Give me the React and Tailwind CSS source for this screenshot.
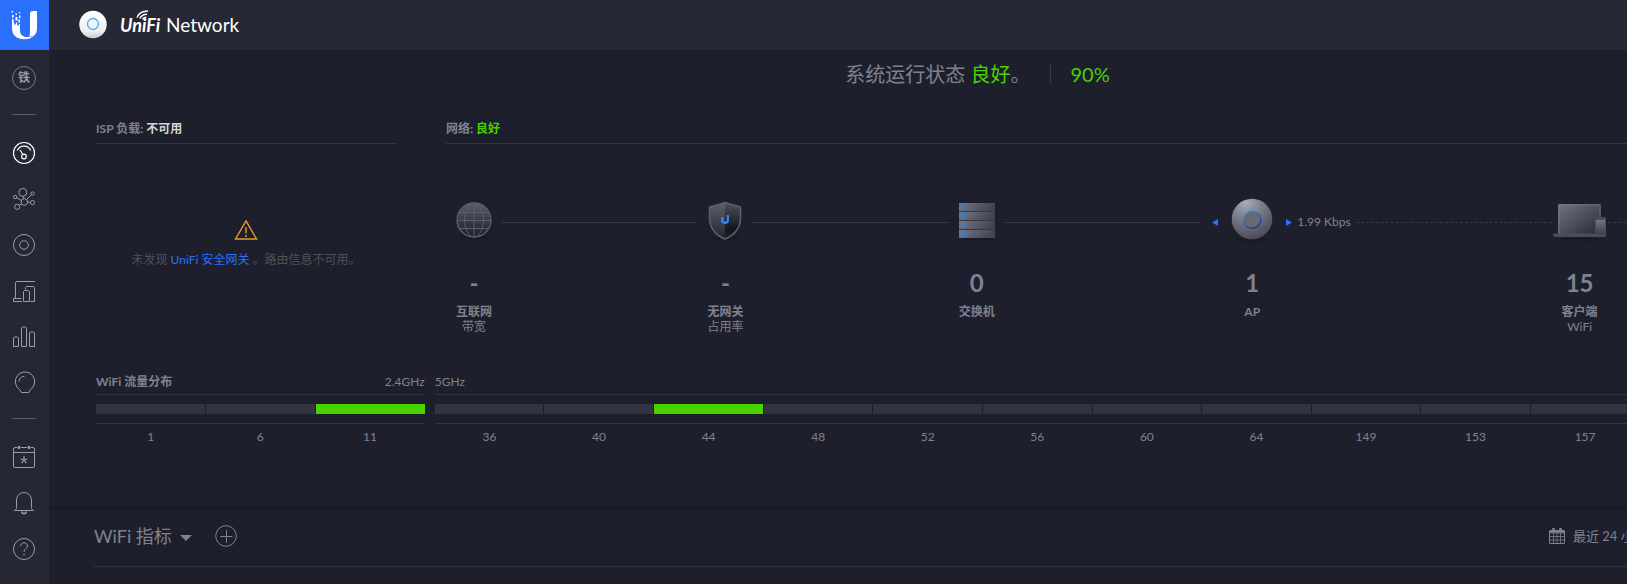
import React from "react";

const channels24 = [
  { channel: 1 },
  { channel: 6 },
  { channel: 11, active: true },
];

const channels5 = [
  { channel: 36 },
  { channel: 40 },
  { channel: 44, active: true },
  { channel: 48 },
  { channel: 52 },
  { channel: 56 },
  { channel: 60 },
  { channel: 64 },
  { channel: 149 },
  { channel: 153 },
  { channel: 157 },
  { channel: 161 },
  { channel: 165 },
];

function Icon({ children }) {
  return (
    <svg width="24" height="24" viewBox="0 0 24 24" fill="none" stroke="currentColor" strokeWidth="1" aria-hidden="true">
      {children}
    </svg>
  );
}

const mainNav = [
  {
    label: "仪表板",
    active: true,
    icon: (
      <Icon>
        <g strokeWidth="1.2">
          <circle cx="12" cy="12" r="10.5" />
          <path d="M5.2 9.6C6.6 6.6 9 5.2 12 5.2s5.4 1.4 6.8 4.4" />
          <circle cx="12" cy="15.5" r="2.3" />
          <path d="M10.8 13.5 8 9" />
        </g>
      </Icon>
    ),
  },
  {
    label: "拓扑",
    icon: (
      <Icon>
        <circle cx="10.8" cy="5.4" r="4" />
        <circle cx="12.3" cy="15" r="3.3" />
        <circle cx="20.6" cy="6.5" r="1.6" />
        <circle cx="20.5" cy="15.6" r="2.1" />
        <circle cx="3.2" cy="10" r="1.7" />
        <circle cx="5.2" cy="19.8" r="2.6" />
        <path d="M11.3 9.4l.4 2.3M14.5 12.6l5-4.9M15.6 15.2h2.8M4.7 10.8l4.7 2.6M7.3 18.2l2.4-1.4" />
      </Icon>
    ),
  },
  {
    label: "设备",
    icon: (
      <Icon>
        <circle cx="12" cy="12" r="10.5" />
        <circle cx="12" cy="12" r="4.3" />
      </Icon>
    ),
  },
  {
    label: "客户端",
    icon: (
      <Icon>
        <path d="M23 2.500H4.500L3.500 3.500V19.500M1.500 19.500H9.500M10 22.500H1.500v-3" />
        <path d="M13.500 10.500V8.500l1-1h7l1 1v14h-4" />
        <path d="M11.500 12.500l1-1h4l1 1v10h-6z" />
      </Icon>
    ),
  },
  {
    label: "统计",
    icon: (
      <Icon>
        <path d="M1.500 21.500v-8.500l1-1h3l1 1v8.500zM9.500 21.500V3l1-1h3l1 1v18.500zM17.500 21.500V8l1-1h3l1 1v13.500z" />
      </Icon>
    ),
  },
  {
    label: "洞察",
    icon: (
      <Icon>
        <path d="M7.800 18.800a9.700 9.700 0 1 1 10.400 0l-1.400 2.700H9.200z" />
        <path d="M7 10.500a6 6 0 0 1 5.500-5.200" />
      </Icon>
    ),
  },
];

const secondaryNav = [
  {
    label: "事件",
    icon: (
      <Icon>
        <path d="M5.500 2.500H3A1.500 1.500 0 0 0 1.500 4v17A1.500 1.500 0 0 0 3 22.500h18a1.500 1.500 0 0 0 1.500-1.500V4A1.500 1.500 0 0 0 21 2.500h-2.500M8.500 2.500h7M1.500 7.500h21" />
        <path strokeWidth="2" d="M7 1v3M17 1v3" />
        <path strokeWidth="1.200" d="M12 11v4M12 15l-3.500-1M12 15l3.500-1M12 15l-2.300 3.200M12 15l2.300 3.200" />
      </Icon>
    ),
  },
  {
    label: "警报",
    icon: (
      <Icon>
        <path d="M2.500 19.500c1.500-.600 2-1.500 2-3V9a7.500 7.500 0 0 1 15 0v7.500c0 1.500.500 2.400 2 3z" />
        <path strokeWidth="1.500" d="M9.800 20.500c0 2.800 4.400 2.800 4.400 0" />
      </Icon>
    ),
  },
  {
    label: "帮助",
    icon: (
      <Icon>
        <circle cx="12" cy="12" r="10.500" />
        <path d="M8.700 9.200c0-4.600 6.800-4.400 6.800-.3 0 2.800-3.500 2.700-3.500 6M12 16.800v1.700" />
      </Icon>
    ),
  },
];

function NavItem({ label, active, icon }) {
  return (
    <a
      href="#"
      aria-label={label}
      className={`flex h-[46px] w-12 items-center justify-center ${active ? "text-white" : "text-[#9a9ca8]"}`}
    >
      {icon}
    </a>
  );
}

function Sidebar() {
  return (
    <nav className="flex w-[49px] shrink-0 flex-col items-start bg-[#252735]">
      <a href="#" aria-label="Ubiquiti" className="flex h-[50px] w-full items-center justify-center bg-[#2b70fb]">
        <svg width="28" height="30" viewBox="0 0 28 30" fill="#fff" aria-hidden="true">
          <path d="M26 1v16.500c0 3.300-.600 5.400-2 7.200-1 1.300-3 .600-6 1.800 1.200-1.400 1-3.500 1-7V4c0-2 1-3 3-3z" />
          <path d="M1 11.500h2v3h1.800v-2h1.400v3H8V14h1v6c0 3.300 1 5 3.500 6.300 3.500 1.700 8 .5 11-1.300-2 2.800-5.700 4.200-10.200 4.200C5 29.200 1 24.800 1 17.800z" />
          <path d="M.5 1H2v1.500H.5zM4.500 3.500H6V5H4.500zM8 2h1.200v1.200H8zM1 5h1.700v2.500H1zM4.500 7h2v3.500h-2zM8 5.500h1.500V8H8zM1 9h1.500v3H1zM7.500 9.500H9v3H7.500z" />
        </svg>
      </a>
      <button
        type="button"
        aria-label="站点 铁"
        className="mt-4 ml-3 flex size-6 items-center justify-center rounded-full border border-[#777985] text-xs leading-none font-bold text-[#9a9ca8]"
      >
        铁
      </button>
      <div className="mt-6 mb-[15px] ml-3 h-px w-6 bg-[#5b5d69]" />
      {mainNav.map((item) => (
        <NavItem key={item.label} {...item} />
      ))}
      <div className="mt-3 mb-[15px] ml-3 h-px w-6 bg-[#5b5d69]" />
      {secondaryNav.map((item) => (
        <NavItem key={item.label} {...item} />
      ))}
    </nav>
  );
}

function Header() {
  return (
    <header className="flex h-[50px] shrink-0 items-center bg-[#262836] pl-[30px] text-white">
      <svg width="28" height="30" viewBox="0 0 28 30" aria-hidden="true">
        <defs>
          <linearGradient id="disc" x1="0" y1="0" x2="0" y2="1">
            <stop offset="0" stopColor="#fff" />
            <stop offset=".75" stopColor="#eeeeef" />
            <stop offset="1" stopColor="#c9cacd" />
          </linearGradient>
        </defs>
        <circle cx="14" cy="14.500" r="13.700" fill="url(#disc)" />
        <circle cx="14" cy="14" r="5.500" fill="#f2f3f4" stroke="#45aef2" strokeWidth="1.300" />
      </svg>
      <h1 className="flex items-baseline gap-[6px] pl-[13px] text-[19px] leading-6">
        <span className="relative font-['Liberation_Sans_Narrow','Lato',sans-serif] text-lg leading-6 font-bold italic">
          UniFi
          <svg
            className="absolute -top-[3px] left-4"
            width="13"
            height="10"
            viewBox="0 0 13 10"
            fill="none"
            stroke="#fff"
            strokeWidth="1.500"
            aria-hidden="true"
          >
            <path d="M1 7.500C2.500 3.500 6.500 1 12 1M3.800 8.500C5 6 7.500 4.300 11 4.200M6.500 9.300C7.300 8.200 8.500 7.400 10.200 7.300" />
          </svg>
        </span>
        <span>Network</span>
      </h1>
    </header>
  );
}

function GlobeIcon() {
  return (
    <svg width="40" height="42" viewBox="0 0 40 42" aria-hidden="true">
      <defs>
        <linearGradient id="globe" x1="0" y1="0" x2="0" y2="1">
          <stop offset="0" stopColor="#5b5c6c" />
          <stop offset="1" stopColor="#1c1d29" />
        </linearGradient>
      </defs>
      <ellipse cx="20" cy="37" rx="15" ry="3" fill="#191a25" />
      <circle cx="20" cy="20" r="17" fill="url(#globe)" />
      <g fill="none" stroke="#5c5e6c">
        <circle cx="20" cy="20" r="17" strokeWidth="1.300" />
        <ellipse cx="20" cy="20" rx="9.500" ry="17" />
        <path d="M20 3v34M3 20.500h34M5.500 12.500h29M5.500 28.500h29" />
      </g>
    </svg>
  );
}

function ShieldIcon() {
  return (
    <svg width="40" height="42" viewBox="0 0 40 42" aria-hidden="true">
      <defs>
        <linearGradient id="shieldLeft" x1="0" y1="0" x2="0" y2="1">
          <stop offset="0" stopColor="#5f606e" />
          <stop offset="1" stopColor="#22232f" />
        </linearGradient>
        <linearGradient id="shieldRight" x1="0" y1="0" x2="0" y2="1">
          <stop offset="0" stopColor="#50515e" />
          <stop offset=".7" stopColor="#151620" />
          <stop offset="1" stopColor="#1c1d29" />
        </linearGradient>
      </defs>
      <ellipse cx="20" cy="38" rx="15" ry="2.500" fill="#191a25" />
      <path d="M20 2.500 4.500 7v11c0 10 6.500 17.500 15.500 21z" fill="url(#shieldLeft)" />
      <path d="M20 2.500 35.500 7v11c0 10-6.500 17.500-15.500 21z" fill="url(#shieldRight)" />
      <path d="M20 2.500 35.500 7v11c0 10-6.500 17.500-15.500 21C11 35.500 4.500 28 4.500 18V7z" fill="none" stroke="#5e606c" strokeWidth="1.500" />
      <path d="M17.200 17v3.500c0 3 5.600 3 5.600 0V15" fill="none" stroke="#2f86ee" strokeWidth="2.300" />
    </svg>
  );
}

function SwitchIcon() {
  return (
    <svg width="40" height="42" viewBox="0 0 40 42" aria-hidden="true">
      <defs>
        <linearGradient id="rack" x1="0" y1="0" x2="1" y2=".2">
          <stop offset="0" stopColor="#777886" />
          <stop offset="1" stopColor="#444551" />
        </linearGradient>
      </defs>
      <ellipse cx="20" cy="39" rx="16" ry="2" fill="#191a25" />
      <rect x="2" y="3" width="36" height="35" fill="#373844" />
      {[3, 12, 21, 30].map((y) => (
        <g key={y}>
          <rect x="2" y={y} width="36" height="8" fill="url(#rack)" />
          <rect x="4.500" y={y + 2.5} width="3.500" height="3.500" fill="#547ca8" stroke="#2681d3" strokeWidth="1.200" />
        </g>
      ))}
    </svg>
  );
}

function AccessPointIcon() {
  return (
    <svg width="42" height="46" viewBox="0 0 42 46" aria-hidden="true">
      <defs>
        <radialGradient id="ap" cx=".35" cy=".1" r=".95">
          <stop offset="0" stopColor="#aaabb9" />
          <stop offset=".5" stopColor="#747582" />
          <stop offset="1" stopColor="#474852" />
        </radialGradient>
        <linearGradient id="ring" x1="0" y1="0" x2=".6" y2="1">
          <stop offset="0" stopColor="#48a9e6" />
          <stop offset="1" stopColor="#1d379e" />
        </linearGradient>
      </defs>
      <ellipse cx="21" cy="42" rx="17" ry="3" fill="#191a25" />
      <circle cx="21" cy="21" r="20.300" fill="url(#ap)" />
      <circle cx="21" cy="21.500" r="8.800" fill="#686975" stroke="url(#ring)" strokeWidth="1.500" />
    </svg>
  );
}

function ClientsIcon() {
  return (
    <svg width="54" height="42" viewBox="0 0 54 42" aria-hidden="true">
      <defs>
        <linearGradient id="screen" x1="0" y1="0" x2="1" y2="1">
          <stop offset="0" stopColor="#6f707f" />
          <stop offset="1" stopColor="#2a2b38" />
        </linearGradient>
        <linearGradient id="frame" x1="0" y1="0" x2="1" y2="1">
          <stop offset="0" stopColor="#777886" />
          <stop offset="1" stopColor="#42434f" />
        </linearGradient>
        <linearGradient id="phone" x1="0" y1="0" x2="0" y2="1">
          <stop offset="0" stopColor="#777886" />
          <stop offset="1" stopColor="#3b3c49" />
        </linearGradient>
      </defs>
      <ellipse cx="28" cy="39" rx="20" ry="2" fill="#191a25" />
      <rect x="5" y="4" width="43" height="32" rx="1.500" fill="url(#frame)" />
      <rect x="7" y="6" width="39" height="28" fill="url(#screen)" />
      <path d="M0 33.500h44V37H3c-1.500 0-3-1-3-2z" fill="#4c4d5a" />
      <rect x="42" y="17" width="11" height="20" rx="1.500" fill="#4b4c59" />
      <rect x="43" y="20" width="9" height="14" fill="url(#phone)" />
    </svg>
  );
}

function NodeInfo({ value, label, detail }) {
  return (
    <div className="flex flex-col items-center whitespace-nowrap">
      <strong className="text-2xl leading-8 font-bold">{value}</strong>
      <span className="mt-[5px] text-xs leading-[15px] font-bold">{label}</span>
      {detail && <span className="text-xs leading-[15px]">{detail}</span>}
    </div>
  );
}

function Node({ icon, ...info }) {
  return (
    <div className="flex w-14 shrink-0 flex-col items-center">
      <div className="flex h-[67px] items-start">{icon}</div>
      <NodeInfo {...info} />
    </div>
  );
}

function Link({ dashed }) {
  return (
    <div className={`mt-[22px] flex-1 border-t border-[#373946] ${dashed ? "border-dashed" : "border-solid"}`} />
  );
}

function Arrow({ left }) {
  return (
    <svg width="6" height="7" viewBox="0 0 6 7" fill="#2b70fb" aria-hidden="true">
      <path d={left ? "M6 0v7L0 3.500z" : "M0 0v7l6-3.500z"} />
    </svg>
  );
}

function Topology() {
  return (
    <div className="flex items-start pt-14 pr-14">
      <Node icon={<GlobeIcon />} value="-" label="互联网" detail="带宽" />
      <Link />
      <Node icon={<ShieldIcon />} value="-" label="无网关" detail="占用率" />
      <Link />
      <Node icon={<SwitchIcon />} value="0" label="交换机" />
      <Link />
      <div className="flex w-[156px] shrink-0 items-start pl-3">
        <div className="flex h-11 items-center">
          <Arrow left />
        </div>
        <div className="mx-[13px] -mt-[2px] flex w-[42px] flex-col items-center">
          <div className="flex h-[69px] items-start">
            <AccessPointIcon />
          </div>
          <NodeInfo value="1" label="AP" />
        </div>
        <div className="flex h-11 items-center gap-[5px] text-xs whitespace-nowrap">
          <Arrow />
          1.99 Kbps
        </div>
      </div>
      <Link dashed />
      <Node icon={<ClientsIcon />} value="15" label="客户端" detail="WiFi" />
      <Link dashed />
    </div>
  );
}

function ChannelBand({ className, heading, channels }) {
  return (
    <div className={`flex flex-col ${className}`}>
      {heading}
      <div className="flex h-[30px] items-center gap-px border-y border-[#323441]">
        {channels.map(({ channel, active }) => (
          <div key={channel} className={`h-[10px] flex-1 ${active ? "bg-[#49d200]" : "bg-[#323441]"}`} />
        ))}
      </div>
      <div className="flex pt-[5px] text-xs leading-4">
        {channels.map(({ channel }) => (
          <span key={channel} className="flex-1 text-center">
            {channel}
          </span>
        ))}
      </div>
    </div>
  );
}

function Overview() {
  return (
    <section className="h-[457px] pr-[46px] pl-[47px]">
      <div className="flex h-[50px] items-center justify-center pb-[2px] text-xl">
        <p>
          系统运行状态 <span className="text-[#49d200]">良好</span>。
        </p>
        <div className="mr-[19px] ml-5 h-5 w-px bg-[#373946]" />
        <span className="text-[#49d200]">90%</span>
      </div>

      <div className="flex gap-[50px] pt-[19px]">
        <div className="w-[300px] shrink-0">
          <h2 className="border-b border-[#323441] pb-1 text-xs leading-5 font-bold">
            ISP 负载: <span className="text-[#d5d5d8]">不可用</span>
          </h2>
          <div className="flex flex-col items-center pt-[75px] text-xs">
            <svg width="24" height="22" viewBox="0 0 24 22" fill="none" stroke="#e59a23" strokeWidth="1.400" aria-hidden="true">
              <path d="M12 1.800 22.500 20h-21zM12 8v6.500M12 16v2" />
            </svg>
            <p className="mt-[11px] leading-4 text-[#4f5056]">
              未发现{" "}
              <a href="#" className="text-[#2b70fb]">
                UniFi 安全网关
              </a>{" "}
              。路由信息不可用。
            </p>
          </div>
        </div>
        <div className="min-w-0 flex-1">
          <h2 className="border-b border-[#323441] pb-1 text-xs leading-5 font-bold">
            网络: <span className="text-[#49d200]">良好</span>
          </h2>
          <Topology />
        </div>
      </div>

      <div className="mt-[38px] flex gap-[10px]">
        <ChannelBand
          className="flex-[3]"
          channels={channels24}
          heading={
            <div className="flex items-center justify-between pb-[2px] text-xs leading-5">
              <h2 className="font-bold">WiFi 流量分布</h2>
              <span>2.4GHz</span>
            </div>
          }
        />
        <ChannelBand
          className="flex-[13]"
          channels={channels5}
          heading={<div className="pb-[2px] text-xs leading-5">5GHz</div>}
        />
      </div>
    </section>
  );
}

function Metrics() {
  return (
    <section className="flex-1 pr-[46px] pl-[45px] shadow-[inset_0_3px_3px_-1px_#191a26]">
      <div className="flex h-[60px] items-center border-b border-[#323441] pb-[2px]">
        <button type="button" className="flex items-center gap-2 text-lg">
          WiFi 指标
          <svg className="mt-1" width="12" height="6" viewBox="0 0 12 6" fill="currentColor" aria-hidden="true">
            <path d="M0 0h12L6 6z" />
          </svg>
        </button>
        <button type="button" aria-label="添加" className="ml-[23px]">
          <svg width="22" height="22" viewBox="0 0 22 22" fill="none" stroke="currentColor" aria-hidden="true">
            <circle cx="11" cy="11" r="10.300" />
            <path d="M11.500 5v12.500M5 11.500h12.500" />
          </svg>
        </button>
        <label className="ml-auto flex items-center gap-2">
          <svg width="16" height="17" viewBox="0 0 16 17" fill="none" stroke="currentColor" aria-label="时间范围">
            <rect x=".5" y="3.500" width="15" height="13" rx=".5" />
            <path d="M.5 6h15M.5 9.500h15M.5 13h15M4.500 6v10M8 6v10M11.500 6v10" strokeWidth=".8" />
            <path d="M1 4.500h14" strokeWidth="2.500" />
            <path d="M4.500 1v3M11.500 1v3" strokeWidth="2.500" />
          </svg>
          <select className="w-[286px] appearance-none bg-transparent text-[13px] leading-5 outline-none">
            <option>最近 24 小时</option>
          </select>
        </label>
      </div>
    </section>
  );
}

export default function App() {
  return (
    <div className="flex min-h-screen overflow-hidden bg-[#1e1f2d] font-['Lato','Noto_Sans_CJK_SC',sans-serif] text-[#808290]">
      <Sidebar />
      <div className="flex min-w-0 flex-1 flex-col overflow-hidden">
        <Header />
        <main className="flex min-w-[1856px] flex-1 flex-col">
          <Overview />
          <Metrics />
        </main>
      </div>
    </div>
  );
}
